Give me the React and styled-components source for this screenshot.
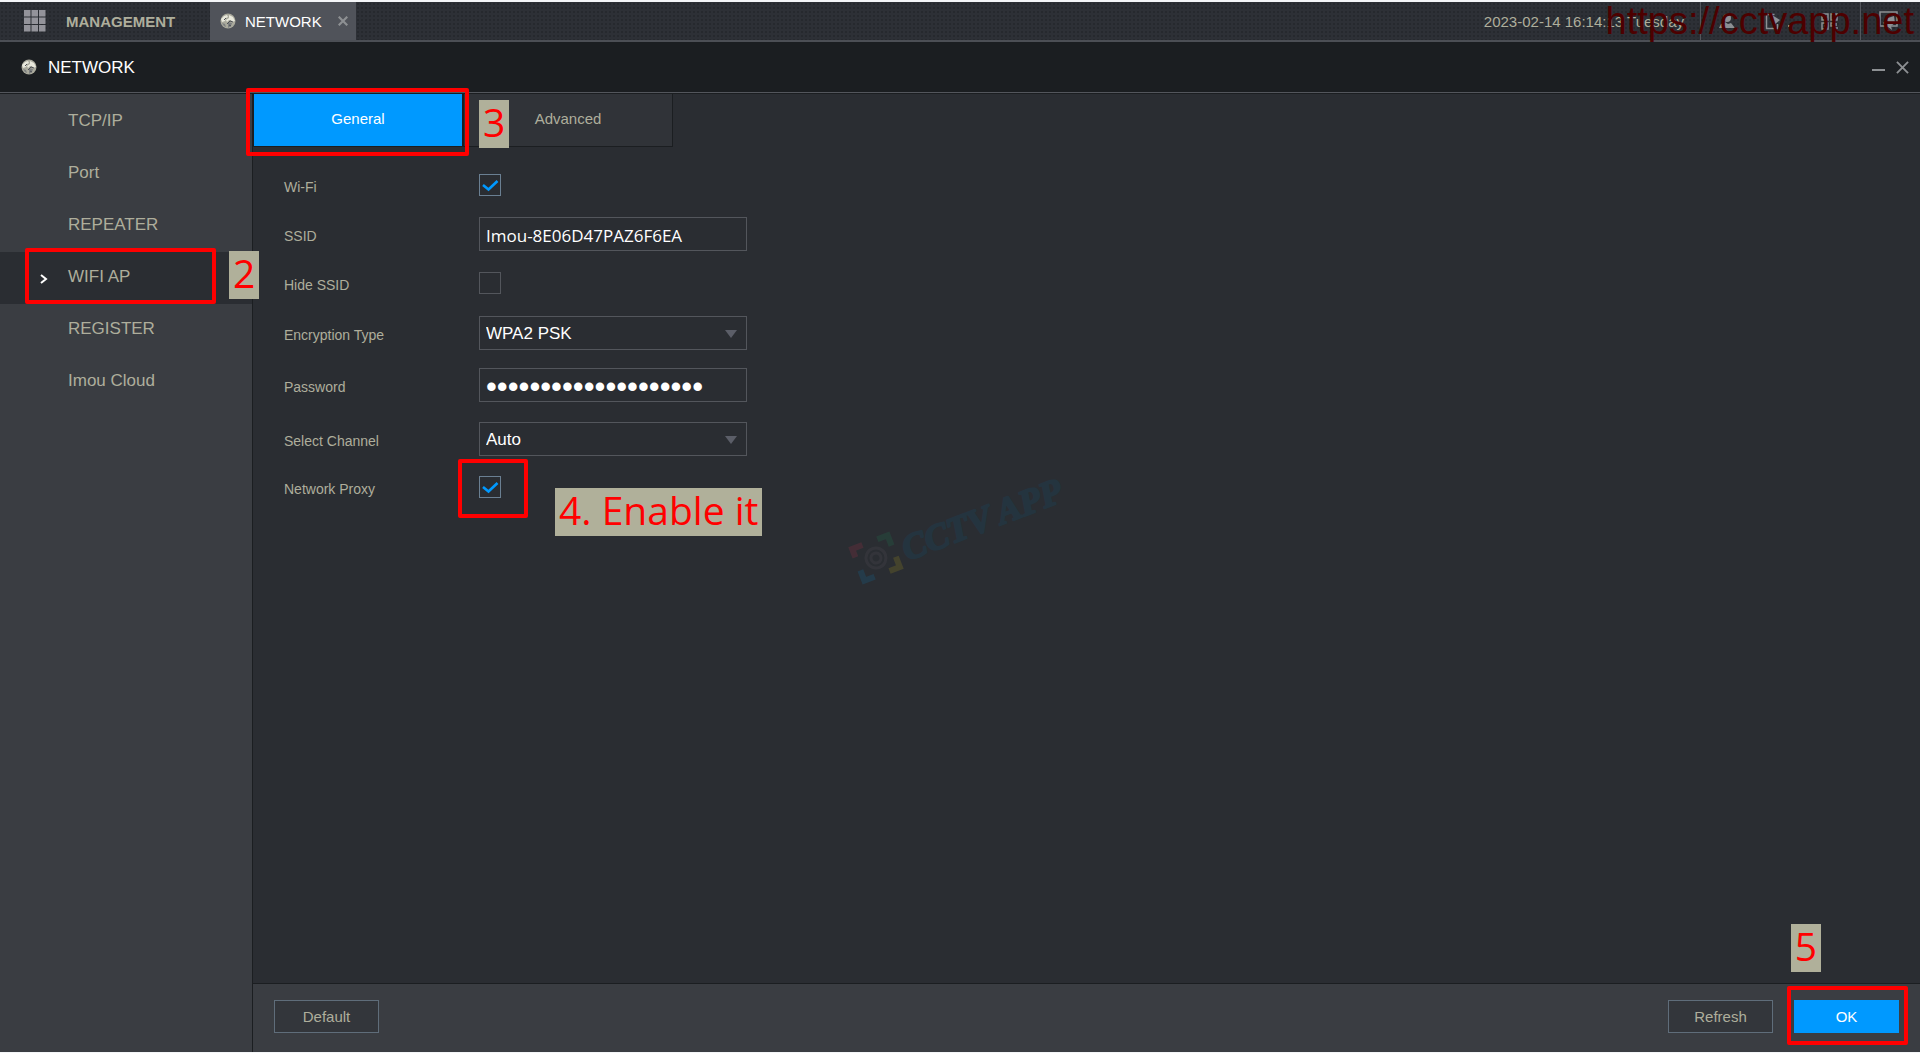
import React, { useState } from 'react'
import styled, { createGlobalStyle } from 'styled-components'

const GlobalStyle = createGlobalStyle`
  * {
    box-sizing: border-box;
  }
  body {
    margin: 0;
    background: #f4f6f8;
    font-family: 'Liberation Sans', Arial, sans-serif;
    font-size: 14px;
    color: #aeae9c;
  }
  button, input, select {
    font-family: inherit;
  }
`
const Screen = styled.div`
  position: relative;
  display: flex;
  flex-direction: column;
  min-height: 100vh;
  padding: 2px 0 1px;
  overflow: hidden;
`
const TaskBar = styled.header`
  display: flex;
  height: 40px;
  border-bottom: 2px solid #4c4f55;
  background-color: #2d3036;
  background-image: radial-gradient(#26292e 1px, transparent 1px);
  background-size: 4px 4px;
`
const MenuButton = styled.button`
  display: flex;
  align-items: center;
  gap: 20px;
  width: 210px;
  padding: 0 0 0 24px;
  border: 0;
  background: none;
  color: #aeae9c;
  font-size: 15px;
  font-weight: bold;
`
const TaskTab = styled.div`
  display: flex;
  align-items: center;
  gap: 9px;
  width: 146px;
  padding: 0 8px 0 10px;
  background: #50535a;
  color: white;
  font-size: 15px;
`
const IconButton = styled.button`
  display: flex;
  padding: 0;
  border: 0;
  background: none;
  color: #8d9093;
`
const TabClose = styled(IconButton)`
  margin-left: auto;
`
const Clock = styled.time`
  align-self: center;
  margin-left: auto;
  padding-right: 16px;
  font-size: 15px;
`
const Tray = styled.div`
  display: flex;
  align-items: center;
  gap: 30px;
  padding: 0 22px 0 18px;
  border-left: 1px solid #53565c;
`
const TitleBar = styled.div`
  display: flex;
  align-items: center;
  gap: 11px;
  height: 51px;
  padding: 0 11px 0 21px;
  border-bottom: 1px solid #53565c;
  background: #1b1e21;
`
const Title = styled.h1`
  flex: 1;
  margin: 0;
  padding-top: 1px;
  color: white;
  font-size: 17px;
  font-weight: normal;
`
const Body = styled.div`
  flex: 1;
  display: flex;
  border-top: 1px solid #1b1e21;
`
const Sidebar = styled.nav`
  width: 253px;
  padding-top: 2px;
  border-right: 1px solid #1b1e21;
  background: #3a3d42;
`
const MenuLink = styled.a`
  display: flex;
  align-items: center;
  height: 52px;
  padding: 0 0 2px 40px;
  background: ${p => (p.$active ? '#2a2d32' : 'none')};
  color: #aeae9c;
  font-size: 17px;
  text-decoration: none;
`
const Marker = styled.span`
  display: flex;
  width: 28px;
  padding-top: 4px;
`
const Content = styled.main`
  flex: 1;
  display: flex;
  flex-direction: column;
  background: #2a2d32;
`
const Tabs = styled.div`
  display: flex;
`
const Tab = styled.button`
  width: 210px;
  height: 53px;
  padding: 0 0 4px;
  border: 1px solid #1b1e21;
  border-top: 0;
  background: ${p => (p.$active ? '#0099ff' : '#303338')};
  color: ${p => (p.$active ? 'white' : '#aeae9c')};
  font-size: 15px;
`
const Form = styled.form`
  flex: 1;
  padding: 13px 31px;
`
const Row = styled.div`
  display: flex;
  align-items: center;
  height: ${p => p.$height}px;
`
const Label = styled.label`
  width: 195px;
  padding-top: 3px;
`
const TextField = styled.input`
  width: 268px;
  height: 34px;
  padding: 2px 6px 0;
  border: 1px solid #53565c;
  border-radius: 0;
  background: #2a2d32;
  color: white;
  font-family: 'Open Sans', 'Noto Sans', sans-serif;
  font-size: 17px;
`
const PasswordField = styled(TextField)`
  padding-top: 4px;
  font-family: 'Liberation Sans', Arial, sans-serif;
  font-size: 31px;
`
const SelectBox = styled.div`
  position: relative;
`
const Select = styled.select`
  width: 268px;
  height: 34px;
  padding: 1px 28px 0 6px;
  appearance: none;
  border: 1px solid #53565c;
  border-radius: 0;
  background: #2a2d32;
  color: white;
  font-size: 17px;
`
const Caret = styled.span`
  position: absolute;
  top: 14px;
  right: 10px;
  border: 6px solid transparent;
  border-top: 8px solid #5b5e68;
  border-bottom: 0;
  pointer-events: none;
`
const Check = styled.span`
  display: grid;
  width: 22px;
  height: 22px;
  input, svg {
    grid-area: 1 / 1;
    width: 22px;
    height: 22px;
    margin: 0;
  }
  input {
    appearance: none;
    border: 1px solid #53565c;
  }
  input:checked {
    border-color: #6a7f92;
  }
  svg {
    visibility: hidden;
    pointer-events: none;
  }
  input:checked + svg {
    visibility: visible;
  }
`
const ActionBar = styled.footer`
  display: flex;
  align-items: center;
  gap: 21px;
  height: 69px;
  padding: 0 21px 4px;
  border-top: 1px solid #1b1e21;
  background: #3a3d42;
`
const Action = styled.button`
  width: 105px;
  height: 33px;
  border: 1px solid ${p => (p.$primary ? '#0099ff' : '#5f6d7a')};
  background: ${p => (p.$primary ? '#0099ff' : '#33363b')};
  color: ${p => (p.$primary ? 'white' : '#aeae9c')};
  font-size: 15px;
  &:first-child {
    margin-right: auto;
  }
`
// red guide frames and step numbers lie over the screen
const Frame = styled.div`
  position: absolute;
  left: ${p => p.$x}px;
  top: ${p => p.$y}px;
  width: ${p => p.$w}px;
  height: ${p => p.$h}px;
  border: 4px solid red;
  border-radius: 2px;
  pointer-events: none;
`
const OkFrame = styled(Frame)`
  left: auto;
  top: auto;
  right: 12px;
  bottom: 8px;
`
const Step = styled.div`
  position: absolute;
  left: ${p => p.$x}px;
  top: ${p => p.$y}px;
  padding: 0 4px 4px;
  background: #b0b09a;
  color: red;
  font-family: 'Open Sans', 'Noto Sans', sans-serif;
  font-size: 39px;
  line-height: 44px;
  white-space: nowrap;
`
const OkStep = styled(Step)`
  left: auto;
  top: auto;
  right: 99px;
  bottom: 81px;
`
const SiteMark = styled.div`
  position: absolute;
  top: 0;
  right: 6px;
  color: #4d0000;
  font-size: 38px;
  line-height: 42px;
  pointer-events: none;
`
const LogoMark = styled.svg`
  position: absolute;
  left: 840px;
  top: 460px;
  pointer-events: none;
`

const GridIcon = () => (
  <svg width="22" height="22" fill="#93939a">
    {[0, 7.5, 15].map(y =>
      [0, 7.5, 15].map(x => <rect key={`${x}-${y}`} x={x} y={y} width="6.5" height="6.5" />)
    )}
  </svg>
)

const Globe = () => (
  <svg width="16" height="16" viewBox="0 0 16 16">
    <circle cx="8" cy="8" r="7.5" fill="#a9a99c" />
    <path d="M1 6 4 3l3-1 1 2-2 1-1 3-3 1zM9 2l4 2 2 4-3 1-1-2H9L7 9 6 7l3-2z" fill="#e8e8dc" />
    <path d="M8 9l4 1-1 3-3 2zM2 10l3 1 1 3-2-1z" fill="#7c7f80" />
    <path d="M4 7l2-2M7 11l3-3 3 1M9 12l2 1" stroke="#4d5055" fill="none" />
  </svg>
)

const Cross = ({ size, width = 2 }) => (
  <svg width={size} height={size} viewBox="0 0 14 14" stroke="currentColor" strokeWidth={width}>
    <path d="M1 1l12 12M13 1 1 13" />
  </svg>
)

const CheckBox = ({ id, on }) => {
  const [checked, setChecked] = useState(on)
  return (
    <Check>
      <input
        id={id}
        type="checkbox"
        checked={checked}
        onChange={e => setChecked(e.target.checked)}
      />
      <svg viewBox="0 0 22 22" fill="none" stroke="#0099ff" strokeWidth="2.6">
        <path d="M4 11l5.5 4.5L18.5 7" />
      </svg>
    </Check>
  )
}

const DropDown = ({ id, options }) => (
  <SelectBox>
    <Select id={id}>
      {options.map(o => (
        <option key={o}>{o}</option>
      ))}
    </Select>
    <Caret />
  </SelectBox>
)

const Field = ({ id, label, height = 50, children }) => (
  <Row $height={height}>
    <Label htmlFor={id}>{label}</Label>
    {children}
  </Row>
)

const menu = ['TCP/IP', 'Port', 'REPEATER', 'WIFI AP', 'REGISTER', 'Imou Cloud']

const App = () => (
  <Screen>
    <GlobalStyle />
    <TaskBar>
      <MenuButton>
        <GridIcon />
        MANAGEMENT
      </MenuButton>
      <TaskTab>
        <Globe />
        NETWORK
        <TabClose aria-label="Close tab">
          <Cross size={10} width={3} />
        </TabClose>
      </TaskTab>
      <Clock>2023-02-14 16:14:13 Tuesday</Clock>
      <Tray>
        <IconButton aria-label="User">
          <svg width="16" height="16" fill="currentColor">
            <circle cx="8" cy="5" r="4" />
            <path d="M0 15l2-4 4-2 3 2 3-1 4 5z" />
          </svg>
        </IconButton>
        <IconButton aria-label="Log out">
          <svg width="26" height="17" fill="none" stroke="currentColor">
            <path d="M12.5 11v4.5h-11v-14h8" strokeWidth="1.5" />
            <path d="M7 2l8 5-6 5z" fill="currentColor" stroke="none" />
            <path d="M23 13h3" strokeWidth="2" />
          </svg>
        </IconButton>
        <IconButton aria-label="QR code">
          <svg width="17" height="17" fill="none" stroke="currentColor" strokeWidth="1.5">
            <path d="M1 1h6v6H1zM10 1h6v6h-6zM1 10h6v6H1zM4 3v2M13 3v2M4 12v2M10 10h3v3h-3zM15 10v3M13 15h4" />
          </svg>
        </IconButton>
      </Tray>
      <Tray>
        <IconButton aria-label="Display">
          <svg width="19" height="20" fill="none" stroke="currentColor" strokeWidth="1.5">
            <path d="M1 1h17v14H1z" />
            <path d="M4 12l5-5 6-2 1 7-4 3 1 4-4-3z" fill="currentColor" stroke="none" />
          </svg>
        </IconButton>
      </Tray>
    </TaskBar>
    <TitleBar>
      <Globe />
      <Title>NETWORK</Title>
      <IconButton aria-label="Minimize">
        <svg width="13" height="14">
          <path d="M0 9h13v2H0z" fill="currentColor" />
        </svg>
      </IconButton>
      <IconButton aria-label="Close">
        <Cross size={13} width={2} />
      </IconButton>
    </TitleBar>
    <Body>
      <Sidebar>
        {menu.map(name => (
          <MenuLink key={name} href="#" $active={name === 'WIFI AP'}>
            <Marker>
              {name === 'WIFI AP' && (
                <svg width="8" height="10" fill="none" stroke="white" strokeWidth="2">
                  <path d="M1 1l5 4-5 4" />
                </svg>
              )}
            </Marker>
            {name}
          </MenuLink>
        ))}
      </Sidebar>
      <Content>
        <Tabs>
          <Tab $active>General</Tab>
          <Tab>Advanced</Tab>
        </Tabs>
        <Form>
          <Field id="wifi" label="Wi-Fi">
            <CheckBox id="wifi" on />
          </Field>
          <Field id="ssid" label="SSID" height={48}>
            <TextField id="ssid" defaultValue="Imou-8E06D47PAZ6F6EA" />
          </Field>
          <Field id="hide" label="Hide SSID">
            <CheckBox id="hide" on={false} />
          </Field>
          <Field id="encryption" label="Encryption Type">
            <DropDown id="encryption" options={['WPA2 PSK']} />
          </Field>
          <Field id="password" label="Password" height={54}>
            <PasswordField id="password" type="password" defaultValue="00000000000000000000" />
          </Field>
          <Field id="channel" label="Select Channel" height={54}>
            <DropDown id="channel" options={['Auto']} />
          </Field>
          <Field id="proxy" label="Network Proxy" height={42}>
            <CheckBox id="proxy" on />
          </Field>
        </Form>
        <ActionBar>
          <Action>Default</Action>
          <Action>Refresh</Action>
          <Action $primary>OK</Action>
        </ActionBar>
      </Content>
    </Body>
    <LogoMark width="240" height="130" opacity="0.22">
      <g transform="rotate(-21 36 98)">
        <g fill="none" strokeWidth="6">
          <path d="M17 90V81h11" stroke="#a03048" />
          <path d="M44 81h11v11" stroke="#207850" />
          <path d="M55 104v11H44" stroke="#a09020" />
          <path d="M28 115H17v-11" stroke="#1070a0" />
          <circle cx="36" cy="98" r="10" stroke="#55505a" strokeWidth="3" />
          <circle cx="36" cy="98" r="5" stroke="#55505a" strokeWidth="3" />
        </g>
        <text
          x="64"
          y="112"
          fill="#105070"
          stroke="#105070"
          strokeWidth="2"
          strokeLinejoin="round"
          fontFamily="'Liberation Serif', serif"
          fontSize="36"
          fontStyle="italic"
          fontWeight="bold"
        >
          CCTV APP
        </text>
      </g>
    </LogoMark>
    <SiteMark>https://cctvapp.net</SiteMark>
    <Frame $x={246} $y={88} $w={223} $h={68} />
    <Frame $x={25} $y={248} $w={191} $h={56} />
    <Frame $x={458} $y={459} $w={70} $h={59} />
    <OkFrame $w={121} $h={59} />
    <Step $x={229} $y={251}>2</Step>
    <Step $x={479} $y={100}>3</Step>
    <Step $x={555} $y={488}>4. Enable it</Step>
    <OkStep>5</OkStep>
  </Screen>
)

export default App
